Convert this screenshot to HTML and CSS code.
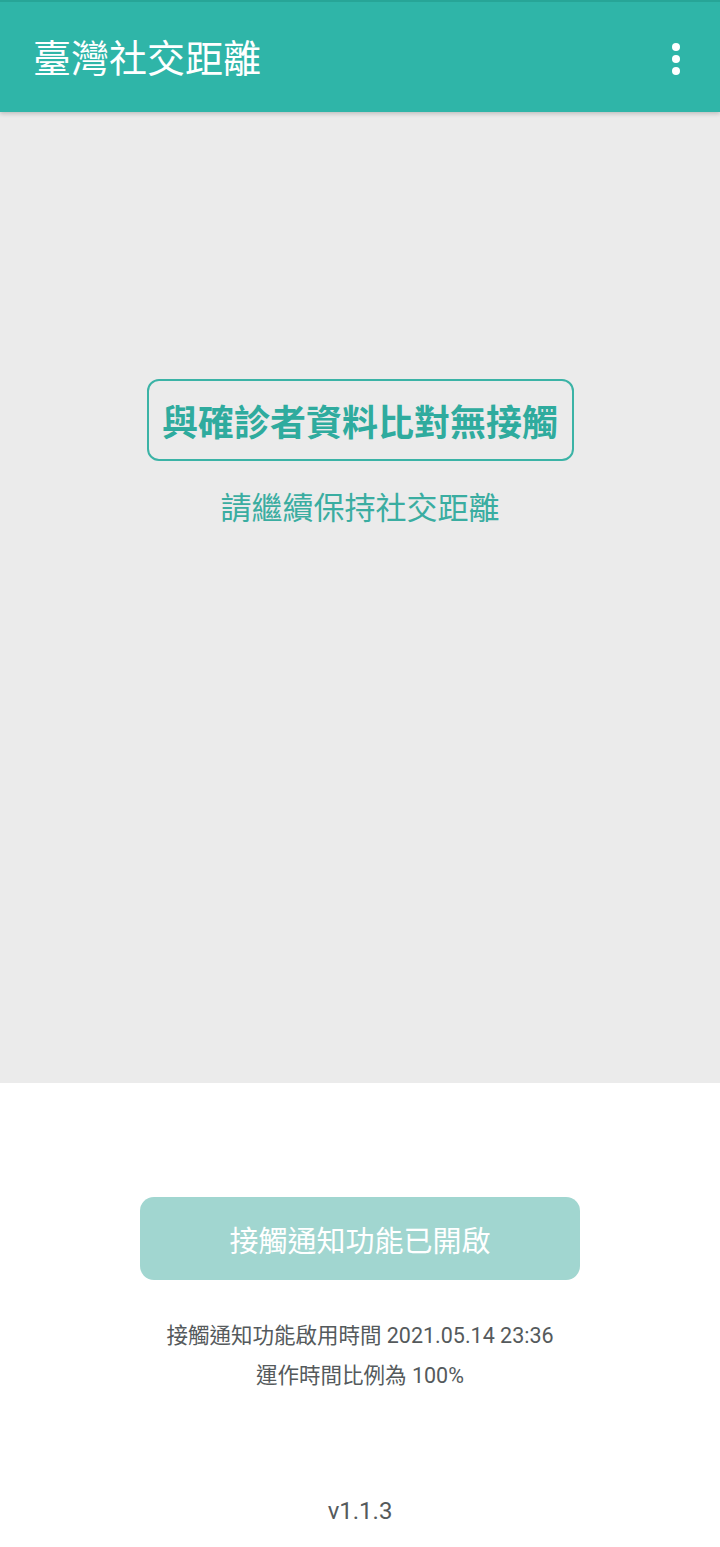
FILE: index.html
```html
<!DOCTYPE html>
<html lang="zh-Hant">
<head>
    <meta charset="UTF-8">
    <meta name="viewport" content="width=device-width, initial-scale=1.0">
    <title>臺灣社交距離</title>
    <link rel="stylesheet" href="styles.css">
</head>
<body>
    <header class="app-bar">
        <h1 class="app-title">臺灣社交距離</h1>
        <div class="menu-btn" aria-label="更多選項">
            <span class="dot"></span>
            <span class="dot"></span>
            <span class="dot"></span>
        </div>
    </header>

    <section class="status-area">
        <div class="status-box">與確診者資料比對無接觸</div>
        <p class="status-hint">請繼續保持社交距離</p>
    </section>

    <section class="control-area">
        <button class="notify-btn" disabled>接觸通知功能已開啟</button>
        <div class="info">
            <p>接觸通知功能啟用時間 2021.05.14 23:36</p>
            <p>運作時間比例為 100%</p>
        </div>
        <p class="version">v1.1.3</p>
    </section>
</body>
</html>
```

FILE: styles.css
```css
body {
    font-family: Roboto, "Noto Sans CJK TC", sans-serif;
    margin: 0;
    background-color: #ffffff;
    width: 720px;
    height: 1547px;
    overflow: hidden;
}
.app-bar {
    position: relative;
    z-index: 1;
    height: 112px;
    box-sizing: border-box;
    border-top: 2px solid #27a597;
    background-color: #2fb5a8;
    box-shadow: 0 2px 4px rgba(0, 0, 0, 0.18);
    display: flex;
    align-items: center;
    justify-content: space-between;
    padding: 4px 40px 0 33px;
}
.app-title {
    margin: 0;
    color: #ffffff;
    font-size: 38px;
    font-weight: 400;
    line-height: 1;
}
.menu-btn {
    display: flex;
    flex-direction: column;
    gap: 4px;
}
.dot {
    width: 8px;
    height: 8px;
    border-radius: 50%;
    background-color: #ffffff;
}
.status-area {
    height: 971px;
    background-color: #ebebeb;
    display: flex;
    flex-direction: column;
    align-items: center;
    padding-top: 267px;
    box-sizing: border-box;
}
.status-box {
    height: 82px;
    box-sizing: border-box;
    width: 427px;
    border: 2px solid #3bb3a6;
    border-radius: 12px;
    display: flex;
    align-items: center;
    justify-content: center;
    color: #2fab9e;
    font-size: 36px;
    font-weight: 700;
}
.status-hint {
    margin: 28px 0 0;
    color: #3aada1;
    font-size: 31px;
    line-height: 40px;
}
.control-area {
    display: flex;
    flex-direction: column;
    align-items: center;
    padding-top: 114px;
}
.notify-btn {
    width: 440px;
    height: 83px;
    border: none;
    border-radius: 14px;
    background-color: #a1d6d0;
    color: #ffffff;
    font-family: inherit;
    font-size: 29px;
    padding: 0;
}
.info {
    margin-top: 36px;
    text-align: center;
    color: #555a5c;
    font-size: 21.5px;
    line-height: 40px;
}
.info p {
    margin: 0;
}
.version {
    margin: 100px 0 0;
    color: #555a5c;
    font-size: 24px;
    line-height: 30px;
}
```
